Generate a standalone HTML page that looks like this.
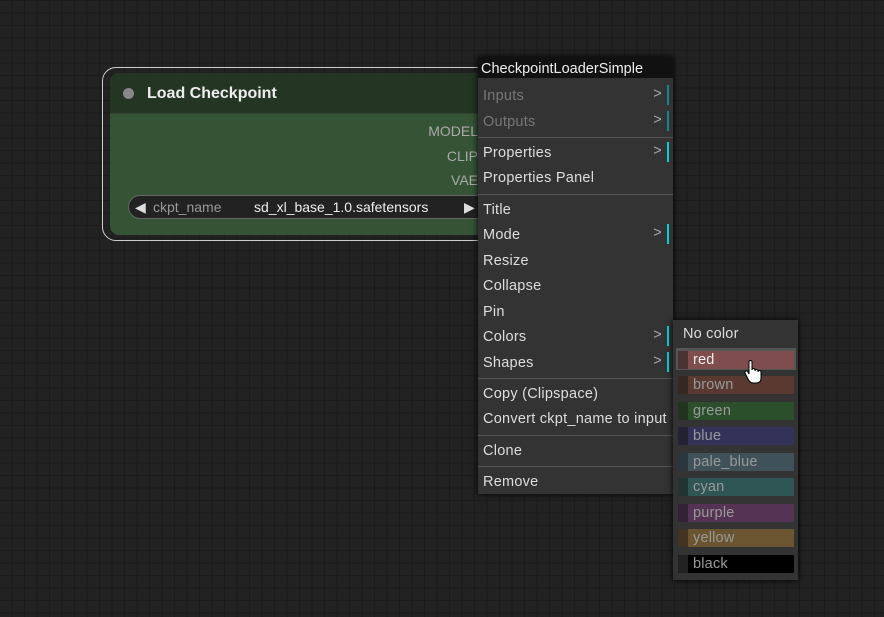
<!DOCTYPE html><html><head><style>
body{margin:0;width:884px;height:617px;overflow:hidden;background:#222;
background-image:linear-gradient(#1b1b1b 1px,transparent 1px),linear-gradient(90deg,#1b1b1b 1px,transparent 1px);background-size:12.5px 12.5px;background-position:-1px 0;
font-family:"Liberation Sans",sans-serif;position:relative}
.a{position:absolute}
.sel{left:102px;top:67px;width:390px;height:172px;border:1.5px solid #ccc;border-radius:14px}
.node{left:110px;top:73px;width:380px;height:162px;background:#355335;border-radius:9px;overflow:hidden}
.tb{height:40px;background:#243524;border-bottom:1px solid #2f452f}
.dot{left:13px;top:15px;width:11px;height:11px;border-radius:50%;background:#888}
.ttl{left:37px;top:12px;color:#eee;font-size:16px;font-weight:bold}
.out{right:12px;color:#aaa;font-size:14px}
.wid{left:18px;top:122px;width:360px;height:22px;background:#222;border:1px solid #666;border-radius:12px;font-size:14px}
.menu{left:478px;top:57px;width:195px;height:437px;background:#333;box-shadow:0 0 6px #000;font-size:14.5px;letter-spacing:0.25px;color:#ddd}
.mt{height:21px;background:#111;color:#eee;padding-left:3px;line-height:24px;letter-spacing:0}
.it{position:absolute;left:5px;width:186px;white-space:nowrap}
.dis{color:#777}
.ar{position:absolute;right:7px;top:-2px;color:#aaa}
.bar{position:absolute;right:0;top:-3px;width:2px;height:20px;background:#1cc}
.sep{position:absolute;left:0;width:195px;height:1px;background:#555}
.sub{left:673px;top:320px;width:125px;height:260px;background:#333;box-shadow:0 0 6px #000;font-size:14.5px;letter-spacing:0.2px}
.sw{position:absolute;left:5px;width:116px;height:18px}
.sw i{position:absolute;left:0;top:0;width:10px;height:18px}
.sw span{position:absolute;left:10px;top:0;width:106px;height:18px;line-height:18px;padding-left:5px;box-sizing:border-box;color:#999}
</style></head><body>
<div class="a sel"></div>
<div class="a node"><div class="tb"></div>
<div class="a dot"></div><div class="a ttl">Load Checkpoint</div>
<div class="a out" style="top:50px">MODEL</div>
<div class="a out" style="top:75px">CLIP</div>
<div class="a out" style="top:99px">VAE</div>
<div class="a wid"><span class="a" style="left:6px;top:3px;color:#ddd">◀</span><span class="a" style="left:24px;top:3px;color:#999">ckpt_name</span><span class="a" style="left:125px;top:3px;color:#eee">sd_xl_base_1.0.safetensors</span><span class="a" style="left:335px;top:3px;color:#ddd">▶</span></div>
</div>
<div class="a menu"><div class="mt">CheckpointLoaderSimple</div>
<div class="it dis" style="top:31px">Inputs<span class="ar">&gt;</span><span class="bar" style="background:#188"></span></div>
<div class="it dis" style="top:57px">Outputs<span class="ar">&gt;</span><span class="bar" style="background:#188"></span></div>
<div class="sep" style="top:80px"></div>
<div class="it" style="top:88px">Properties<span class="ar">&gt;</span><span class="bar"></span></div>
<div class="it" style="top:113px">Properties Panel</div>
<div class="sep" style="top:137px"></div>
<div class="it" style="top:145px">Title</div>
<div class="it" style="top:170px">Mode<span class="ar">&gt;</span><span class="bar"></span></div>
<div class="it" style="top:196px">Resize</div>
<div class="it" style="top:221px">Collapse</div>
<div class="it" style="top:247px">Pin</div>
<div class="it" style="top:272px">Colors<span class="ar">&gt;</span><span class="bar"></span></div>
<div class="it" style="top:298px">Shapes<span class="ar">&gt;</span><span class="bar"></span></div>
<div class="sep" style="top:321px"></div>
<div class="it" style="top:329px">Copy (Clipspace)</div>
<div class="it" style="top:354px">Convert ckpt_name to input</div>
<div class="sep" style="top:378px"></div>
<div class="it" style="top:386px">Clone</div>
<div class="sep" style="top:409px"></div>
<div class="it" style="top:417px">Remove</div>
</div>
<div class="a sub">
<div class="a" style="left:10px;top:6px;color:#ddd">No color</div>
<div class="a" style="left:3px;top:28px;width:120px;height:22px;background:#555"></div>
<div class="sw" style="top:31px"><i style="background:#4a3333"></i><span style="background:#7f4d4d;color:#eee">red</span></div>
<div class="sw" style="top:56px"><i style="background:#332922"></i><span style="background:#593930">brown</span></div>
<div class="sw" style="top:82px"><i style="background:#223322"></i><span style="background:#2b4f2b">green</span></div>
<div class="sw" style="top:107px"><i style="background:#222233"></i><span style="background:#33335a">blue</span></div>
<div class="sw" style="top:133px"><i style="background:#2a363b"></i><span style="background:#3f5159">pale_blue</span></div>
<div class="sw" style="top:158px"><i style="background:#233"></i><span style="background:#2f5555">cyan</span></div>
<div class="sw" style="top:184px"><i style="background:#332233"></i><span style="background:#553355">purple</span></div>
<div class="sw" style="top:209px"><i style="background:#432"></i><span style="background:#6b5531">yellow</span></div>
<div class="sw" style="top:235px"><i style="background:#222"></i><span style="background:#000">black</span></div>
</div>
<svg class="a" style="left:744px;top:360px" width="18" height="24" viewBox="0 0 18 24"><path d="M5 2 a1.5 1.5 0 0 1 3 0 v8 a1.5 1.5 0 0 1 3 0 v1 a1.5 1.5 0 0 1 3 0 v1 a1.5 1.5 0 0 1 3 0 v6 q0 5 -5 5 h-3 q-3 0 -5 -4 l-3 -6 a1.5 1.5 0 0 1 3 -1 l1 2z" fill="#fff" stroke="#000" stroke-width="1"/></svg>
</body></html>
